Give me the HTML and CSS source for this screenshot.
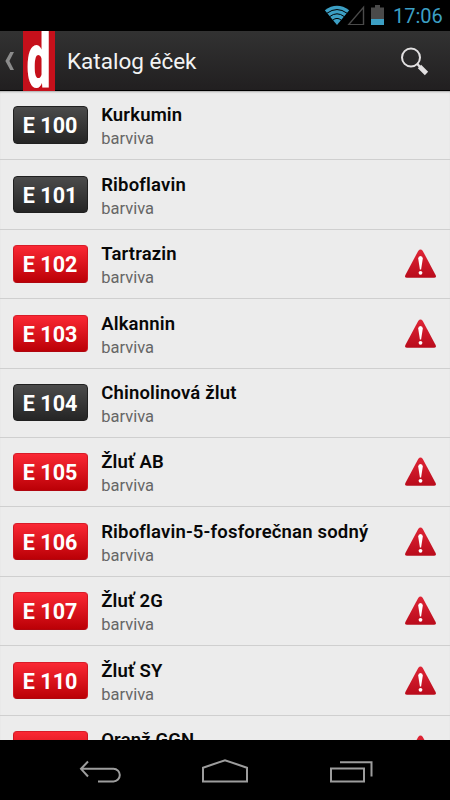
FILE: index.html
```
<!DOCTYPE html>
<html lang="cs">

<head>
    <meta charset="utf-8">
    <title>Katalog éček</title>
    <link rel="stylesheet" href="styles.css">
</head>

<body>
    <div class="status-bar">
        <svg class="wifi" width="26" height="20" viewBox="0 0 26 20">
            <path d="M.8 5.2 Q13 -3.6 25.2 5.2 L13 20 Z" fill="#3c9fc4" />
            <path d="M3 8.2 Q13 .9 23 8.2 M5.7 11.6 Q13 6 20.3 11.6 M8.7 15.2 Q13 11.6 17.3 15.2" fill="none" stroke="#000" stroke-width="1" />
        </svg>
        <svg class="signal" width="18" height="20" viewBox="0 0 18 20">
            <path d="M1.5 19.8 H16.5 V2.4 Z" fill="none" stroke="#4a4a4a" stroke-width="1.4" />
        </svg>
        <svg class="battery" width="13" height="20" viewBox="0 0 13 20">
            <path d="M0 2.5 H4 V0 H9 V2.5 H13 V14 H0 Z" fill="#4a4a4a" />
            <path d="M0 14 H13 V20 H0 Z" fill="#3c9fc4" />
        </svg>
        <span class="clock">17:06</span>
    </div>

    <div class="action-bar">
        <svg class="up" width="9" height="18" viewBox="0 0 9 18">
            <path d="M5.3 0 H9 L4.4 9 L9 18 H5.3 L.4 9 Z" fill="#8b8b8b" />
        </svg>
        <div class="logo"><span>d</span></div>
        <h1>Katalog éček</h1>
        <svg class="search" width="30" height="30" viewBox="0 0 30 30">
            <circle cx="11" cy="11.5" r="9" fill="none" stroke="#e2e0e1" stroke-width="2" />
            <path d="M17 17.5 L20 21" stroke="#e2e0e1" stroke-width="2.4" />
            <path d="M19.5 20.5 L26.5 27.5" stroke="#e2e0e1" stroke-width="4.6" />
        </svg>
    </div>

    <div class="list" id="list"></div>

    <div class="nav-bar">
        <svg width="450" height="60" viewBox="0 0 450 60" fill="none" stroke="#9d9d9d" stroke-width="2">
            <path d="M88 21.5 L81 28.8 L88 36.5 M81 28.8 H113.5 A6.3 6.3 0 0 1 113.5 41.4 H98" />
            <path d="M203 41.4 V27.7 L225 20.2 L247 27.7 V41.4 Z" />
            <path d="M331 28.5 H364 V41.5 H331 Z M340 22.3 H371.5 V36.5" />
        </svg>
    </div>

    <script>
        const items = [
            ['E 100', 'Kurkumin', false],
            ['E 101', 'Riboflavin', false],
            ['E 102', 'Tartrazin', true],
            ['E 103', 'Alkannin', true],
            ['E 104', 'Chinolinová žlut', false],
            ['E 105', 'Žluť AB', true],
            ['E 106', 'Riboflavin-5-fosforečnan sodný', true],
            ['E 107', 'Žluť 2G', true],
            ['E 110', 'Žluť SY', true],
            ['E 111', 'Oranž GGN', true]
        ];

        const warning = `<svg class="warning" width="34" height="32" viewBox="0 0 34 32">
            <defs><linearGradient id="red" x1="0" y1="0" x2="0" y2="1">
                <stop offset="0" stop-color="#df2536" /><stop offset="1" stop-color="#b90b1b" />
            </linearGradient></defs>
            <path d="M14.2 2.9 Q16.5 0 18.8 2.9 L31.6 27 Q32.8 29.8 30 29.8 H3 Q.2 29.8 1.4 27 Z" fill="url(#red)" />
            <path d="M14.2 10.5 Q14.3 8 16.5 8 Q18.7 8 18.8 10.5 L17.1 21.5 H15.9 Z" fill="#fff" />
            <circle cx="16.5" cy="24.8" r="1.9" fill="#fff" />
        </svg>`;

        document.getElementById('list').innerHTML = items.map(([code, name, danger]) => `
            <div class="item">
                <div class="code ${danger ? 'danger' : ''}">${code}</div>
                <div class="info">
                    <div class="name">${name}</div>
                    <div class="type">barviva</div>
                </div>
                ${danger ? warning : ''}
            </div>`).join('');
    </script>
</body>

</html>
```
FILE: styles.css
```
* {
    box-sizing: border-box;
}

body {
    margin: 0;
    width: 450px;
    height: 800px;
    overflow: hidden;
    display: flex;
    flex-direction: column;
    font-family: Roboto, "Noto Sans", sans-serif;
    background: #000;
}

svg {
    display: block;
    flex: none;
}

.status-bar {
    height: 31px;
    flex: none;
    display: flex;
    align-items: flex-start;
    justify-content: flex-end;
    padding: 5px 8px 0 0;
}

.wifi {
    margin-right: -1px;
}

.signal {
    margin-left: -2px;
}

.battery {
    margin-left: 6px;
}

.clock {
    width: 49px;
    margin-left: 9px;
    color: #3c9fc4;
    font-size: 20px;
    line-height: 22px;
    white-space: nowrap;
}

.action-bar {
    height: 60px;
    flex: none;
    display: flex;
    align-items: center;
    padding: 0 20px 0 5px;
    background: linear-gradient(#323232, #211f20);
    border-bottom: 1px solid #000;
}

.logo {
    width: 32px;
    height: 60px;
    flex: none;
    margin-left: 9px;
    align-self: flex-start;
    display: flex;
    justify-content: center;
    overflow: hidden;
    background: #c5101b;
}

.logo span {
    color: #fff;
    font-size: 77px;
    font-weight: 900;
    line-height: 60px;
    transform: scaleX(0.56);
}

h1 {
    margin: 1px auto 0 12px;
    color: #f3f3f3;
    font-size: 22.5px;
    font-weight: 400;
    line-height: 30px;
}

.list {
    height: 649px;
    flex: none;
    overflow: hidden;
    background: #ececec;
    box-shadow: inset 0 2px 2px -1px #aaa;
}

.item {
    height: 69.4px;
    display: flex;
    align-items: flex-start;
    padding: 15.4px 12px 0 12.6px;
    border-bottom: 1.4px solid #cfcfcf;
}

.code {
    width: 75px;
    height: 37.4px;
    flex: none;
    border: 1px solid #202020;
    border-radius: 4px;
    background: linear-gradient(#4b4b4b, #252525);
    color: #fff;
    font-size: 21.5px;
    font-weight: 700;
    line-height: 37px;
    text-align: center;
    white-space: nowrap;
}

.danger {
    border-color: #d81c28 #d01621 #b0060f;
    background: linear-gradient(#fa2834, #bb0006);
}

.info {
    flex: 1;
    margin: -2px 0 0 13.6px;
}

.name {
    color: #080808;
    font-size: 18.5px;
    font-weight: 600;
    line-height: 22px;
    letter-spacing: 0.17px;
    white-space: nowrap;
}

.type {
    margin-top: 1px;
    color: #666;
    font-size: 16.5px;
    font-weight: 400;
    line-height: 23px;
}

.warning {
    margin: 3px 0 0;
}

.nav-bar {
    height: 60px;
    flex: none;
    background: #000;
}
```
